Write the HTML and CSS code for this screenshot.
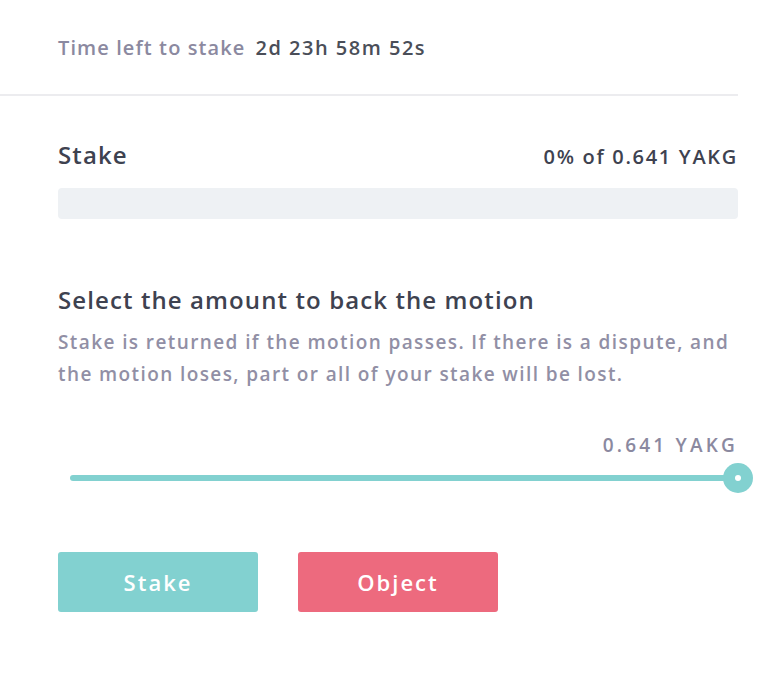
FILE: index.html
```html
<!DOCTYPE html>
<html>
<head>
<meta charset="utf-8">
<link rel="stylesheet" href="styles.css">
</head>
<body>
<div class="panel">
  <div class="timer">
    <span class="timer-label">Time left to stake</span>
    <span class="timer-value">2d 23h 58m 52s</span>
  </div>
  <div class="content">
    <div class="stake-head">
      <h2 class="title">Stake</h2>
      <span class="stake-total">0% of 0.641 YAKG</span>
    </div>
    <div class="progress"></div>
    <h2 class="title select-title">Select the amount to back the motion</h2>
    <p class="desc">Stake is returned if the motion passes. If there is a dispute, and the motion loses, part or all of your stake will be lost.</p>
    <div class="amount">0.641 YAKG</div>
    <div class="slider">
      <div class="track"></div>
      <div class="thumb"></div>
    </div>
    <div class="actions">
      <button class="btn btn-stake">Stake</button>
      <button class="btn btn-object">Object</button>
    </div>
  </div>
</div>
</body>
</html>
```

FILE: styles.css
```css
* { box-sizing: border-box; }
html, body { margin: 0; padding: 0; background: #fff; }
body {
  font-family: "Open Sans", "Noto Sans", sans-serif;
  color: #3e4250;
  width: 778px;
}
.panel { width: 738px; }
.timer {
  height: 96px;
  padding: 34px 0 0 58px;
  border-bottom: 2px solid #ececef;
  display: flex;
  gap: 10px;
  font-size: 20px;
  line-height: 28px;
  font-weight: 600;
  letter-spacing: 1.1px;
}
.timer-label { color: #8b89a0; }
.timer-value { color: #4a4e58; letter-spacing: 1.5px; }
.content { padding: 0 0 0 58px; }
.stake-head {
  display: flex;
  justify-content: space-between;
  align-items: baseline;
  margin-top: 44px;
}
.title {
  margin: 0;
  font-size: 24px;
  line-height: 30px;
  font-weight: 600;
  color: #3e4250;
  letter-spacing: 1.1px;
}
.stake-total {
  font-size: 20px;
  font-weight: 600;
  color: #3e4250;
  letter-spacing: 1.7px;
}
.progress {
  margin-top: 18px;
  height: 31px;
  background: #eef1f4;
  border-radius: 4px;
}
.select-title { margin-top: 66px; }
.desc {
  margin: 11px 0 0;
  font-size: 19px;
  line-height: 32px;
  font-weight: 600;
  color: #918fa5;
  letter-spacing: 1.4px;
}
.amount {
  margin-top: 41px;
  text-align: right;
  font-size: 19px;
  line-height: 28px;
  font-weight: 600;
  color: #8b89a0;
  letter-spacing: 3.2px;
}
.slider {
  position: relative;
  height: 30px;
  margin-top: 4px;
  margin-left: 12px;
}
.track {
  position: absolute;
  left: 0; right: 0; top: 12px;
  height: 6px;
  border-radius: 3px;
  background: #82d1d0;
}
.thumb {
  position: absolute;
  right: -15px; top: 0;
  width: 30px; height: 30px;
  border-radius: 50%;
  background: #82d1d0;
}
.thumb::after {
  content: "";
  position: absolute;
  left: 12px; top: 12px;
  width: 6px; height: 6px;
  border-radius: 50%;
  background: #fff;
}
.actions {
  display: flex;
  gap: 40px;
  margin-top: 59px;
}
.btn {
  width: 200px;
  height: 60px;
  border: none;
  border-radius: 3px;
  color: #fff;
  font-family: "Open Sans", "Noto Sans", sans-serif;
  font-size: 22px;
  font-weight: 600;
  letter-spacing: 2px;
  padding: 0;
}
.btn-stake { background: #82d1d0; }
.btn-object { background: #ed6a7e; }
```
